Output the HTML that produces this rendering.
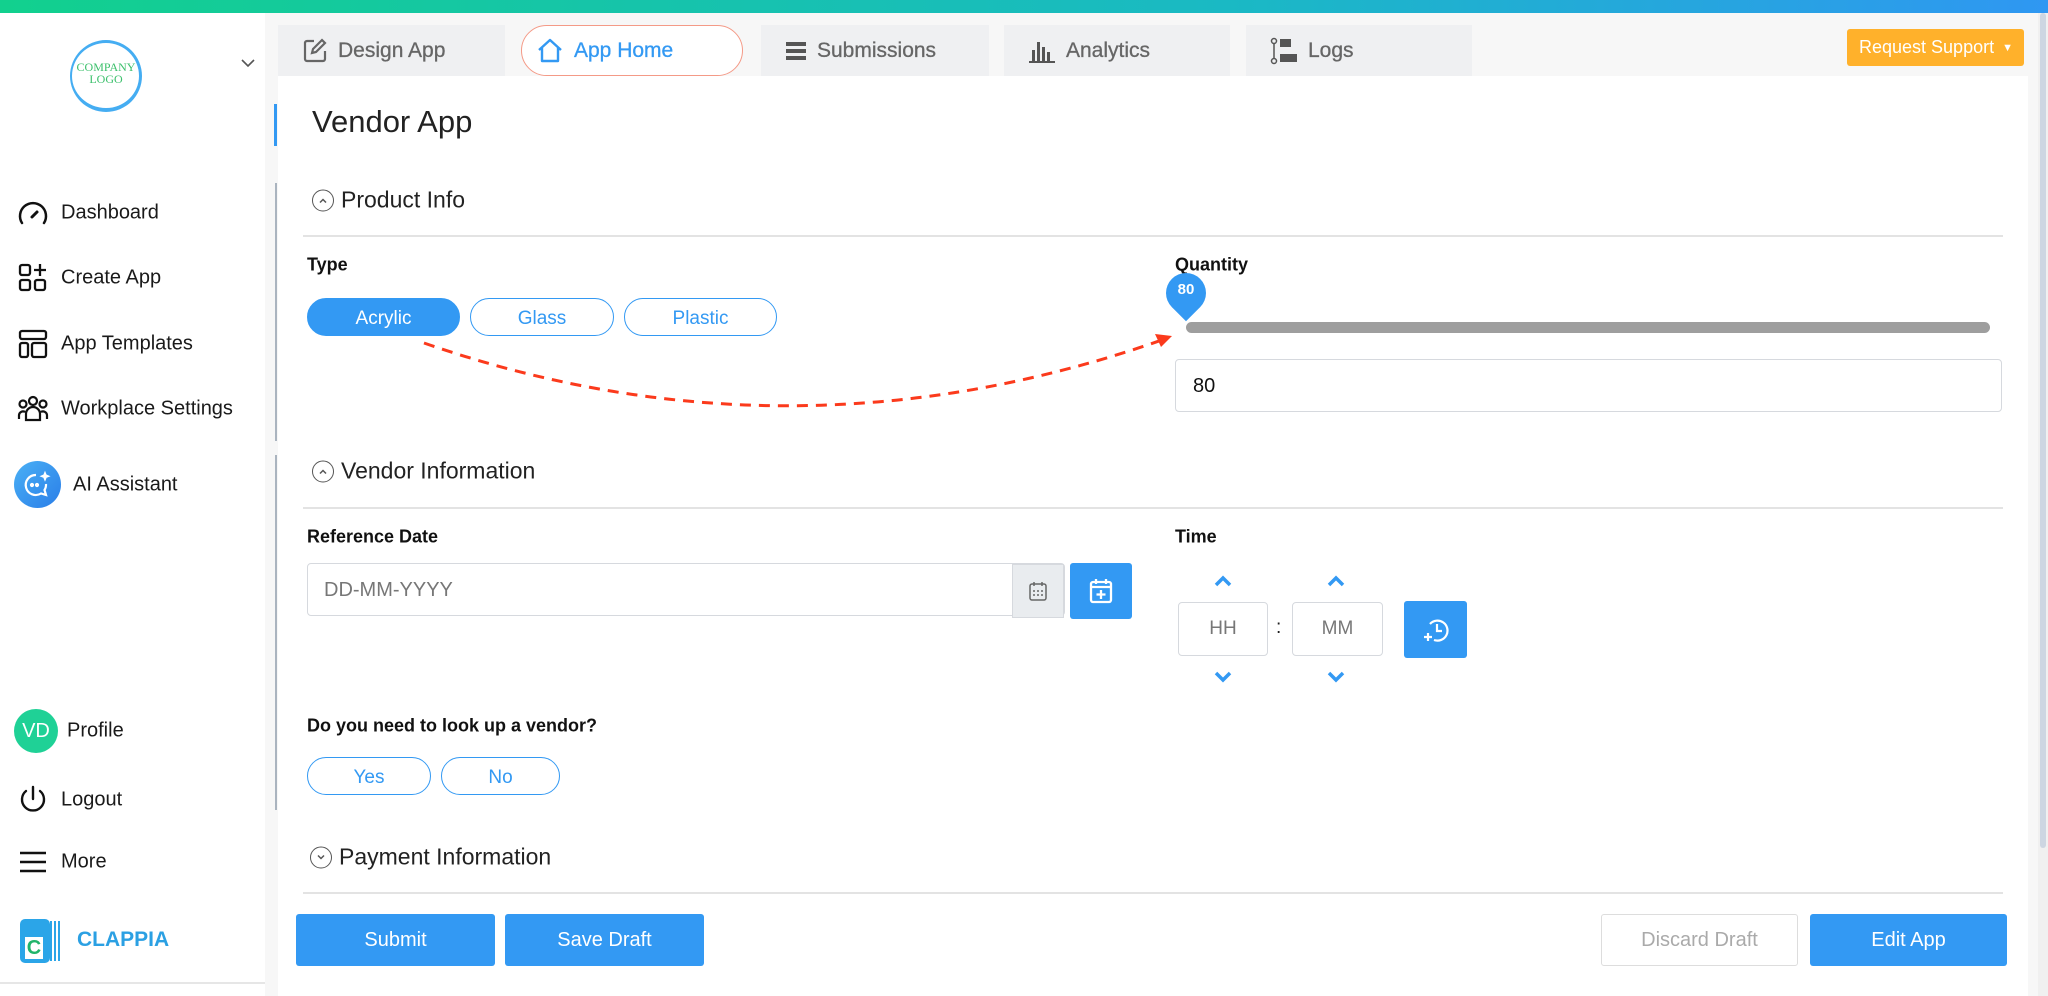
<!DOCTYPE html>
<html><head><meta charset="utf-8"><style>
*{margin:0;padding:0;box-sizing:border-box}
body{width:2048px;height:996px;overflow:hidden;background:#f7f7f7;font-family:"Liberation Sans",sans-serif;color:#1f1f1f;position:relative}
.a{position:absolute}
.topbar{left:0;top:0;width:2048px;height:13px;background:linear-gradient(90deg,#12d08e,#1ab9c4 60%,#2f97f2)}
.side{left:0;top:13px;width:265px;height:983px;background:#fff}
.nav{position:absolute;left:61px;font-size:20px;color:#1a1a1a;transform:translateY(-50%)}
.ic{position:absolute;transform:translate(-50%,-50%)}
.tab{position:absolute;top:25px;height:51px;background:#eff0f2;font-size:21px;color:#666;display:flex;align-items:center;padding-left:24px;gap:10px;-webkit-text-stroke:0.3px #666}
.panel{left:278px;top:76px;width:1750px;height:920px;background:#fff}
.lbl{position:absolute;font-size:18px;font-weight:bold;color:#111;transform:translateY(-50%)}
.chip{position:absolute;height:38px;border:1.5px solid #3399f3;border-radius:19px;color:#3399f3;font-size:19px;display:flex;align-items:center;justify-content:center;padding-top:3px}
.sec{position:absolute;font-size:23px;color:#222;transform:translateY(-50%);display:flex;align-items:center;gap:7px}
.circ{width:22px;height:22px;border:1.5px solid #555;border-radius:50%;display:flex;align-items:center;justify-content:center}
.div{position:absolute;height:1.5px;background:#e3e3e3}
.btn{position:absolute;background:#3399f3;color:#fff;font-size:20px;display:flex;align-items:center;justify-content:center;border-radius:3px}
.box{position:absolute;border:1.5px solid #d6d9de;border-radius:4px;background:#fff}
</style></head><body>
<div class="a topbar"></div>
<div class="a side"></div>
<div class="a" style="left:0;top:982px;width:265px;height:2px;background:#e6e6e6"></div>
<div class="a" style="left:70px;top:40px;width:72px;height:72px;border-radius:50%;border:3px solid #45adf2;border-left-width:2px;border-bottom-width:4px"></div>
<div class="a" style="left:70px;top:61px;width:72px;text-align:center;font-family:'Liberation Serif',serif;font-size:12px;line-height:12px;color:#3cc06c">COMPANY<br>LOGO</div>
<svg class="a" style="left:241px;top:58px" width="14" height="10" viewBox="0 0 14 10"><path d="M1 2l6 6 6-6" fill="none" stroke="#555" stroke-width="1.6"/></svg>
<svg class="ic" style="left:33px;top:213px" width="32" height="28" viewBox="0 0 32 28"><path d="M5 24A13 13 0 1 1 27 24" fill="none" stroke="#111" stroke-width="2.5" stroke-linecap="round"/><path d="M15 18l5-5" stroke="#111" stroke-width="3" stroke-linecap="round"/></svg>
<div class="nav" style="top:213px">Dashboard</div>
<svg class="ic" style="left:33px;top:278px" width="30" height="30" viewBox="0 0 30 30" fill="none" stroke="#111" stroke-width="2.3"><rect x="2" y="2" width="10" height="10" rx="2"/><rect x="2" y="17" width="10" height="10" rx="2"/><rect x="17" y="17" width="10" height="10" rx="2"/><path d="M22 1v12M16 7h12"/></svg>
<div class="nav" style="top:278px">Create App</div>
<svg class="ic" style="left:33px;top:344px" width="30" height="30" viewBox="0 0 30 30" fill="none" stroke="#111" stroke-width="2.3"><rect x="2" y="2" width="26" height="8" rx="2"/><rect x="2" y="14" width="8" height="14" rx="2"/><rect x="14" y="14" width="14" height="14" rx="2"/></svg>
<div class="nav" style="top:344px">App Templates</div>
<svg class="ic" style="left:33px;top:409px" width="34" height="28" viewBox="0 0 34 28" fill="none" stroke="#111" stroke-width="2.2"><circle cx="17" cy="6" r="4"/><circle cx="7" cy="9" r="3.5"/><circle cx="27" cy="9" r="3.5"/><path d="M10 25v-6a7 7 0 0 1 14 0v6zM3 24v-4a4 4 0 0 1 6-3M31 24v-4a4 4 0 0 0-6-3"/></svg>
<div class="nav" style="top:409px">Workplace Settings</div>
<div class="a" style="left:14px;top:461px;width:47px;height:47px;border-radius:50%;background:linear-gradient(135deg,#4ab0f5,#2a7ee8)"></div>
<svg class="ic" style="left:37px;top:485px" width="30" height="30" viewBox="0 0 30 30" fill="none" stroke="#fff" stroke-width="2.2"><path d="M14 5a10 10 0 1 0 5 18.5l5 1.5-1.5-5A10 10 0 0 0 24 14"/><circle cx="10" cy="15" r="1" fill="#fff"/><circle cx="15" cy="15" r="1" fill="#fff"/><path d="M23 2l1.2 3 3 1.2-3 1.2-1.2 3-1.2-3-3-1.2 3-1.2z" fill="#fff" stroke-width="1"/></svg>
<div class="nav" style="top:485px;left:73px">AI Assistant</div>
<div class="a" style="left:14px;top:709px;width:44px;height:44px;border-radius:50%;background:#1fd196;color:#fff;font-size:20px;display:flex;align-items:center;justify-content:center">VD</div>
<div class="nav" style="top:731px;left:67px">Profile</div>
<svg class="ic" style="left:33px;top:800px" width="30" height="30" viewBox="0 0 30 30" fill="none" stroke="#111" stroke-width="2.4" stroke-linecap="round"><path d="M15 2v12"/><path d="M8 6a11 11 0 1 0 14 0"/></svg>
<div class="nav" style="top:800px">Logout</div>
<svg class="ic" style="left:33px;top:862px" width="30" height="24" viewBox="0 0 30 24" stroke="#111" stroke-width="2.4"><path d="M2 3h26M2 12h26M2 21h26"/></svg>
<div class="nav" style="top:862px">More</div>
<div class="a" style="left:20px;top:919px;width:30px;height:44px;border-radius:5px;background:#2ba5e8"></div>
<div class="a" style="left:50px;top:921px;width:12px;height:40px;background:repeating-linear-gradient(90deg,#2ba5e8 0 2px,#fff 2px 4px)"></div>
<div class="a" style="left:25px;top:937px;width:18px;height:22px;background:#fff;color:#21b46a;font-weight:bold;font-size:20px;line-height:22px;text-align:center">C</div>
<div class="a" style="left:77px;top:928px;font-size:21px;font-weight:bold;color:#2ba0e3">CLAPPIA</div>
<div class="tab" style="left:278px;width:227px"><svg width="26" height="26" viewBox="0 0 26 26" fill="none" stroke="#666" stroke-width="2.2"><path d="M12 3H5a2 2 0 0 0-2 2v16a2 2 0 0 0 2 2h16a2 2 0 0 0 2-2v-8"/><path d="M20 2l3 3-9 9-4 1 1-4z"/></svg>Design App</div>
<div class="tab" style="left:521px;width:222px;background:#fff;border:1.5px solid #f49a87;border-radius:27px;color:#3399f3;-webkit-text-stroke:0.3px #3399f3;padding-left:14px"><svg width="28" height="28" viewBox="0 0 28 28" fill="none" stroke="#3399f3" stroke-width="2.4" stroke-linejoin="round"><path d="M3 13L14 3l11 10M6 11v13h16V11"/></svg>App Home</div>
<div class="tab" style="left:761px;width:228px"><svg width="22" height="20" viewBox="0 0 22 20" fill="#555"><rect x="1" y="1" width="20" height="4"/><rect x="1" y="8" width="20" height="4"/><rect x="1" y="15" width="20" height="4"/></svg>Submissions</div>
<div class="tab" style="left:1004px;width:226px"><svg width="28" height="26" viewBox="0 0 28 26" fill="#555"><rect x="4" y="12" width="3" height="11"/><rect x="9" y="4" width="3" height="19"/><rect x="14" y="9" width="3" height="14"/><rect x="19" y="14" width="3" height="9"/><rect x="1" y="23" width="26" height="2"/></svg>Analytics</div>
<div class="tab" style="left:1246px;width:226px"><svg width="28" height="28" viewBox="0 0 28 28"><circle cx="4" cy="4" r="2.5" fill="none" stroke="#555" stroke-width="1.5"/><circle cx="4" cy="24" r="2.5" fill="none" stroke="#555" stroke-width="1.5"/><path d="M4 7v14" stroke="#555" stroke-width="1.5"/><rect x="10" y="2" width="11" height="8" fill="#555"/><rect x="10" y="17" width="17" height="8" fill="#555"/></svg>Logs</div>
<div class="a" style="left:1847px;top:29px;width:177px;height:37px;background:#ffb12b;border-radius:3px;color:#fff;font-size:18px;display:flex;align-items:center;padding-left:12px">Request Support <span style="font-size:11px;margin-left:8px">▼</span></div>
<div class="a" style="left:2038px;top:13px;width:10px;height:983px;background:#f0f0f0"></div>
<div class="a" style="left:2040px;top:13px;width:6px;height:835px;background:#cdd6e2;border-radius:3px"></div>
<div class="a panel"></div>
<div class="a" style="left:274px;top:104px;width:3px;height:42px;background:#3399f3"></div>
<div class="a" style="left:275px;top:183px;width:2px;height:258px;background:#aab4bf"></div>
<div class="a" style="left:275px;top:455px;width:2px;height:355px;background:#aab4bf"></div>
<div class="a" style="left:312px;top:104px;font-size:31px;color:#222">Vendor App</div>
<div class="sec" style="left:312px;top:200px"><div class="circ"><svg width="10" height="8" viewBox="0 0 10 8"><path d="M2 6l3-3 3 3" fill="none" stroke="#555" stroke-width="1.5"/></svg></div>Product Info</div>
<div class="div" style="left:303px;top:235px;width:1700px"></div>
<div class="lbl" style="left:307px;top:265px">Type</div>
<div class="chip" style="left:307px;top:298px;width:153px;background:#3399f3;color:#fff">Acrylic</div>
<div class="chip" style="left:470px;top:298px;width:144px">Glass</div>
<div class="chip" style="left:624px;top:298px;width:153px">Plastic</div>
<div class="lbl" style="left:1175px;top:265px">Quantity</div>
<div class="a" style="left:1166px;top:273px;width:40px;height:40px;border-radius:50% 50% 50% 0;transform:rotate(-45deg);background:#3399f3"></div>
<div class="a" style="left:1166px;top:281px;width:40px;text-align:center;color:#fff;font-size:15px;font-weight:bold">80</div>
<div class="a" style="left:1186px;top:322px;width:804px;height:11px;border-radius:6px;background:#9e9e9e"></div>
<div class="box" style="left:1175px;top:359px;width:827px;height:53px;font-size:20px;padding:15px 0 0 17px;color:#111">80</div>
<svg class="a" style="left:0;top:0" width="1200" height="500"><path d="M424 343Q790 470 1162 340" fill="none" stroke="#fb3a1c" stroke-width="3" stroke-dasharray="11 8"/><path d="M1172 336l-17-2 6 13z" fill="#fb3a1c"/></svg>
<div class="sec" style="left:312px;top:471px"><div class="circ"><svg width="10" height="8" viewBox="0 0 10 8"><path d="M2 6l3-3 3 3" fill="none" stroke="#555" stroke-width="1.5"/></svg></div>Vendor Information</div>
<div class="div" style="left:303px;top:507px;width:1700px"></div>
<div class="lbl" style="left:307px;top:537px">Reference Date</div>
<div class="lbl" style="left:1175px;top:537px">Time</div>
<div class="box" style="left:307px;top:563px;width:758px;height:53px;font-size:20px;color:#777;padding:15px 0 0 16px">DD-MM-YYYY</div>
<div class="a" style="left:1012px;top:564px;width:52px;height:54px;background:#e9ecef;border:1.5px solid #d6d9de;display:flex;align-items:center;justify-content:center"><svg width="20" height="22" viewBox="0 0 20 22" fill="none" stroke="#666" stroke-width="1.5"><rect x="2" y="4" width="16" height="16" rx="2"/><path d="M6 2v4M14 2v4M5 11h2M9 11h2M13 11h2M5 15h2M9 15h2M13 15h2"/></svg></div>
<div class="btn" style="left:1070px;top:563px;width:62px;height:56px"><svg width="24" height="26" viewBox="0 0 24 26" fill="none" stroke="#fff" stroke-width="2.3"><rect x="2" y="4" width="20" height="20" rx="2"/><path d="M7 1v5M17 1v5M2 9h20M12 12v9M7.5 16.5h9"/></svg></div>
<svg class="a" style="left:1214px;top:575px" width="18" height="12"><path d="M2 10l7-7 7 7" fill="none" stroke="#3399f3" stroke-width="3.5"/></svg>
<svg class="a" style="left:1327px;top:575px" width="18" height="12"><path d="M2 10l7-7 7 7" fill="none" stroke="#3399f3" stroke-width="3.5"/></svg>
<div class="box" style="left:1178px;top:602px;width:90px;height:54px;color:#777;font-size:19px;display:flex;align-items:center;justify-content:center">HH</div>
<div class="a" style="left:1276px;top:617px;font-size:19px">:</div>
<div class="box" style="left:1292px;top:602px;width:91px;height:54px;color:#777;font-size:19px;display:flex;align-items:center;justify-content:center">MM</div>
<svg class="a" style="left:1214px;top:671px" width="18" height="12"><path d="M2 2l7 7 7-7" fill="none" stroke="#3399f3" stroke-width="3.5"/></svg>
<svg class="a" style="left:1327px;top:671px" width="18" height="12"><path d="M2 2l7 7 7-7" fill="none" stroke="#3399f3" stroke-width="3.5"/></svg>
<div class="btn" style="left:1404px;top:601px;width:63px;height:57px"><svg width="28" height="28" viewBox="0 0 28 28" fill="none" stroke="#fff" stroke-width="2.2"><path d="M8 8A10 10 0 1 1 12 24"/><path d="M15 8v7h5M6 17v8M2 21h8"/></svg></div>
<div class="lbl" style="left:307px;top:726px">Do you need to look up a vendor?</div>
<div class="chip" style="left:307px;top:757px;width:124px">Yes</div>
<div class="chip" style="left:441px;top:757px;width:119px">No</div>
<div class="sec" style="left:310px;top:857px"><div class="circ"><svg width="10" height="8" viewBox="0 0 10 8"><path d="M2 2l3 3 3-3" fill="none" stroke="#555" stroke-width="1.5"/></svg></div>Payment Information</div>
<div class="div" style="left:303px;top:892px;width:1700px"></div>
<div class="btn" style="left:296px;top:914px;width:199px;height:52px">Submit</div>
<div class="btn" style="left:505px;top:914px;width:199px;height:52px">Save Draft</div>
<div class="btn" style="left:1601px;top:914px;width:197px;height:52px;background:#fff;border:1.5px solid #ddd;color:#aaa">Discard Draft</div>
<div class="btn" style="left:1810px;top:914px;width:197px;height:52px">Edit App</div>
</body></html>
